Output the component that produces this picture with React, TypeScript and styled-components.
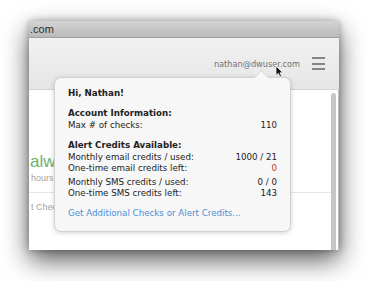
import { FC } from "react";
import styled, { createGlobalStyle } from "styled-components";

const GlobalStyle = createGlobalStyle`
	body {
		margin: 0;
		background: #fff;
		font-family: "DejaVu Sans", Verdana, sans-serif;
	}
`;

interface RowType {
	label: string;
	value: string;
	alert?: boolean;
}

const accountRows: RowType[] = [{ label: "Max # of checks:", value: "110" }];
const emailRows: RowType[] = [
	{ label: "Monthly email credits / used:", value: "1000 / 21" },
	{ label: "One-time email credits left:", value: "0", alert: true },
];
const smsRows: RowType[] = [
	{ label: "Monthly SMS credits / used:", value: "0 / 0" },
	{ label: "One-time SMS credits left:", value: "143" },
];

const Cursor: FC = () => (
	<CursorIcon width="9" height="13" viewBox="0 0 9 13">
		<path
			d="M1 1 L1 10.5 L3.3 8.4 L5 12 L6.6 11.3 L5 7.8 L8 7.8 Z"
			fill="#111"
			stroke="#fff"
			strokeWidth="0.8"
			strokeLinejoin="round"
		/>
	</CursorIcon>
);

const Rows: FC<{ rows: RowType[] }> = ({ rows }) => (
	<RowGroup>
		{rows.map((r) => (
			<Row key={r.label}>
				<span>{r.label}</span>
				<Value $alert={r.alert}>{r.value}</Value>
			</Row>
		))}
	</RowGroup>
);

/** */
export default function App() {
	return (
		<Stage>
			<GlobalStyle />
			<Window>
				<TitleBar>.com</TitleBar>
				<Header>
					<Email>nathan@dwuser.com</Email>
					<Burger>
						<span />
						<span />
						<span />
					</Burger>
				</Header>
				<Content>
					<Main>
						<Headline>always</Headline>
						<Muted>hours</Muted>
						<Divider />
						<Muted>t Checks</Muted>
					</Main>
					<ScrollTrack>
						<ScrollThumb />
					</ScrollTrack>
				</Content>
				<Cursor />
				<Popover>
					<Greeting>Hi, Nathan!</Greeting>
					<Section>
						<Heading>Account Information:</Heading>
						<Rows rows={accountRows} />
					</Section>
					<Section>
						<Heading>Alert Credits Available:</Heading>
						<Rows rows={emailRows} />
						<Rows rows={smsRows} />
					</Section>
					<MoreLink href="#">Get Additional Checks or Alert Credits...</MoreLink>
				</Popover>
			</Window>
		</Stage>
	);
}

//style_components
const Stage = styled.div`
	padding: 21px 31px 31px 29px;
	width: 310px;
`;

const Window = styled.div`
	position: relative;
	width: 310px;
	height: 229px;
	display: flex;
	flex-direction: column;
	background: #fff;
	overflow: hidden;
	box-shadow: 0 10px 24px rgba(0, 0, 0, 0.65), 0 0 7px rgba(0, 0, 0, 0.3);
`;

const TitleBar = styled.div`
	height: 16px;
	flex: none;
	display: flex;
	align-items: center;
	padding-left: 1px;
	font-family: "Liberation Sans", Arial, sans-serif;
	font-size: 11px;
	color: #2c2c2c;
	background: linear-gradient(#d3d3d3, #bababa);
	border-bottom: 1px solid #a0a0a0;
`;

const Header = styled.div`
	height: 51px;
	flex: none;
	display: flex;
	align-items: center;
	justify-content: flex-end;
	gap: 12px;
	padding-right: 14px;
	background: linear-gradient(#f1f1f1, #e6e6e6);
	border-bottom: 1px solid #d4d4d4;
`;

const Email = styled.span`
	font-family: "DejaVu Sans", Verdana, sans-serif;
	font-size: 8.2px;
	color: #727272;
`;

const Burger = styled.div`
	width: 13px;
	display: flex;
	flex-direction: column;
	gap: 3.5px;
	span {
		display: block;
		height: 2px;
		background: #858585;
	}
`;

const Content = styled.div`
	flex: 1;
	display: flex;
`;

const Main = styled.div`
	flex: 1;
	padding-top: 62px;
	margin-left: -3px;
	font-family: "Liberation Sans", Arial, sans-serif;
`;

const Headline = styled.div`
	font-size: 17px;
	line-height: 20px;
	color: #6bb36b;
	padding-left: 4px;
`;

const Muted = styled.div`
	font-size: 9px;
	line-height: 12px;
	color: #a3a3a3;
	padding-left: 5px;
`;

const Divider = styled.div`
	height: 1px;
	background: #e6e6e6;
	margin: 8px 0 8px;
`;

const ScrollTrack = styled.div`
	width: 8px;
	padding: 3px 3px 0 0;
	box-sizing: border-box;
	border-right: 1px solid #bdbdbd;
`;

const ScrollThumb = styled.div`
	width: 5px;
	height: 100%;
	border-radius: 3px 3px 0 0;
	background: #c6c6c6;
`;

const CursorIcon = styled.svg`
	position: absolute;
	left: 246px;
	top: 44px;
	z-index: 3;
`;

const Popover = styled.div`
	position: absolute;
	left: 25px;
	top: 56px;
	width: 237px;
	box-sizing: border-box;
	padding: 10px 13px 12px;
	background: #f7f7f7;
	border: 1px solid #d2d2d2;
	border-radius: 7px;
	box-shadow: 0 1px 5px rgba(0, 0, 0, 0.18);
	font-family: "DejaVu Sans", Verdana, sans-serif;
	font-size: 8.7px;
	line-height: 11px;
	color: #222;
	z-index: 2;
	&::before {
		content: "";
		position: absolute;
		top: -6px;
		left: 201px;
		width: 10px;
		height: 10px;
		background: #f7f7f7;
		border-left: 1px solid #d8d8d8;
		border-top: 1px solid #d8d8d8;
		transform: rotate(45deg);
	}
`;

const Greeting = styled.div`
	font-weight: bold;
	margin-bottom: 9px;
`;

const Section = styled.div`
	margin-bottom: 9px;
`;

const Heading = styled.div`
	font-weight: bold;
	margin-bottom: 1px;
`;

const RowGroup = styled.div`
	& + & {
		margin-top: 3px;
	}
`;

const Row = styled.div`
	display: flex;
	justify-content: space-between;
`;

const Value = styled.span<{ $alert?: boolean }>`
	color: ${(p) => (p.$alert ? "#c0392b" : "#222")};
`;

const MoreLink = styled.a`
	display: block;
	color: #4a8fd8;
	text-decoration: none;
`;
